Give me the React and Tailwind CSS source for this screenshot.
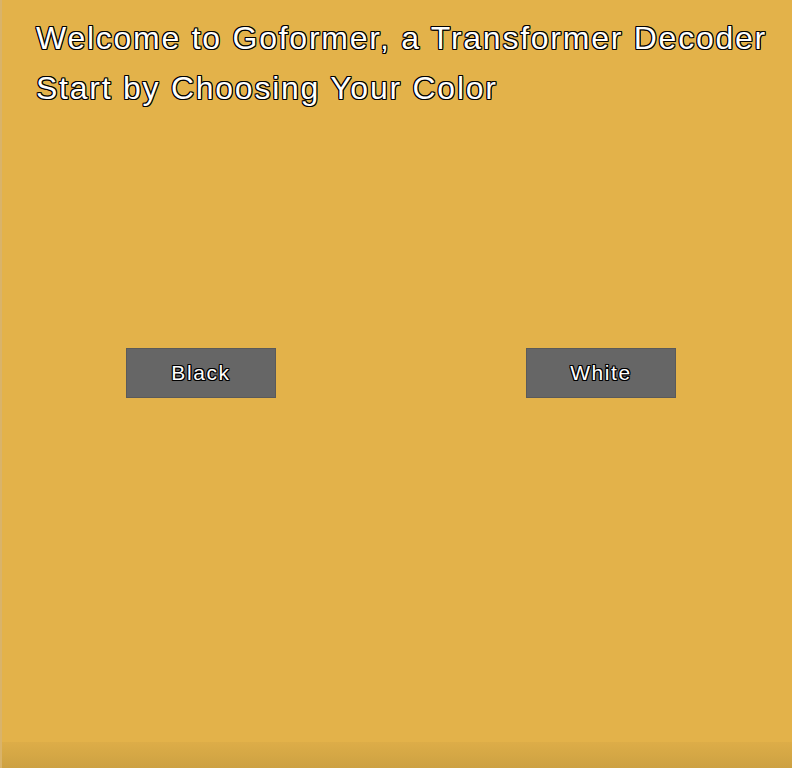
import React from 'react';

const outline =
  '[text-shadow:1px_0_0_#000,-1px_0_0_#000,0_1px_0_#000,0_-1px_0_#000,1px_1px_0_#000,-1px_-1px_0_#000,1px_-1px_0_#000,-1px_1px_0_#000]';

const ColorButton = ({ label }) => (
  <button
    className={`w-[150px] h-[50px] bg-[#666666] border border-[#5a5a5a] text-white text-[21px] tracking-[1.6px] ${outline}`}
  >
    {label}
  </button>
);

export default function App() {
  return (
    <div className="w-[792px] h-[768px] bg-[#e3b24a] flex flex-col font-['Liberation_Sans',Arial,sans-serif] border-l-2 border-[#d9b36a]">
      <div className={`pl-[34px] pt-[13px] text-white text-[32px] leading-[50px] tracking-[1.75px] whitespace-nowrap ${outline}`}>
        <div>Welcome to Goformer, a Transformer Decoder</div>
        <div>Start by Choosing Your Color</div>
      </div>

      {/* color choice */}
      <div className="flex justify-between pl-[124px] pr-[116px] mt-[235px]">
        <ColorButton label="Black" />
        <ColorButton label="White" />
      </div>

      <div className="flex-1" />
      <div className="h-[26px] bg-gradient-to-b from-[#ddad48] to-[#cda142]" />
    </div>
  );
}
